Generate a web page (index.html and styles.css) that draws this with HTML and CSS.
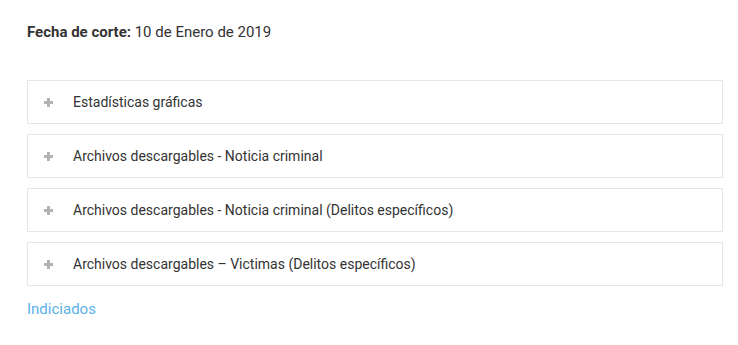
FILE: index.html
```html
<!DOCTYPE html>
<html lang="es">
<head>
    <meta charset="UTF-8">
    <meta name="viewport" content="width=device-width, initial-scale=1.0">
    <title>Estadísticas</title>
    <link rel="stylesheet" href="styles.css">
</head>
<body>
    <div class="content">
        <p class="cutoff"><strong>Fecha de corte:</strong> 10 de Enero de 2019</p>

        <div class="panels">
            <div class="panel">
                <span class="plus"></span>
                <span class="panel-title">Estadísticas gráficas</span>
            </div>
            <div class="panel">
                <span class="plus"></span>
                <span class="panel-title">Archivos descargables - Noticia criminal</span>
            </div>
            <div class="panel">
                <span class="plus"></span>
                <span class="panel-title">Archivos descargables - Noticia criminal (Delitos específicos)</span>
            </div>
            <div class="panel">
                <span class="plus"></span>
                <span class="panel-title">Archivos descargables – Victimas (Delitos específicos)</span>
            </div>
        </div>

        <a class="link" href="#">Indiciados</a>
    </div>
</body>
</html>
```

FILE: styles.css
```css
/* General Reset */
* {
    margin: 0;
    padding: 0;
    box-sizing: border-box;
}

body {
    font-family: Roboto, "Liberation Sans", Arial, sans-serif;
    background-color: #fff;
    color: #333;
}

.content {
    padding: 22px 15px 0 27px;
}

.cutoff {
    font-size: 15px;
    line-height: 20px;
    color: #333;
}

.cutoff strong {
    font-weight: 700;
}

.panels {
    margin-top: 38px;
    display: flex;
    flex-direction: column;
    gap: 10px;
}

.panel {
    height: 44px;
    border: 1px solid #e6e6e6;
    display: flex;
    align-items: center;
    padding-left: 16px;
    font-size: 14px;
    color: #333;
}

/* Glyph-style plus sign */
.plus {
    position: relative;
    width: 9px;
    height: 9px;
    margin-right: 20px;
    margin-top: 1px;
}

.plus::before,
.plus::after {
    content: "";
    position: absolute;
    background-color: #b3b3b3;
}

.plus::before {
    left: 3px;
    top: 0;
    width: 3px;
    height: 9px;
}

.plus::after {
    left: 0;
    top: 3px;
    width: 9px;
    height: 3px;
}

.link {
    display: inline-block;
    margin-top: 14px;
    font-size: 15px;
    color: #5bb2ea;
    text-decoration: none;
}
```
